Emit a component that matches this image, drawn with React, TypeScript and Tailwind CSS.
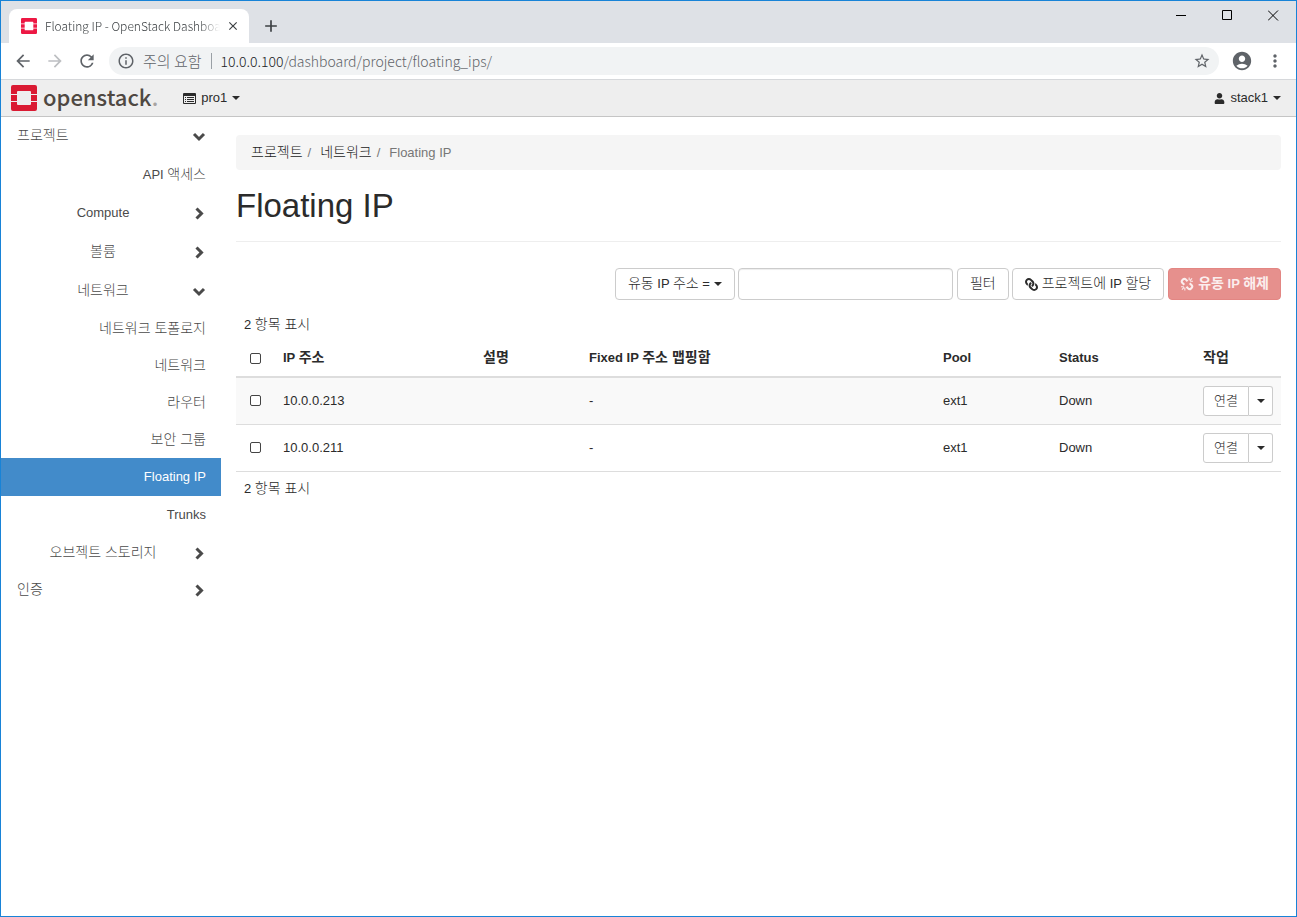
import type { ReactNode } from "react";
import {
  MdAccountCircle,
  MdAdd,
  MdArrowBack,
  MdArrowForward,
  MdClose,
  MdInfoOutline,
  MdMoreVert,
  MdRefresh,
  MdStarBorder,
} from "react-icons/md";
import { FaLink, FaUser } from "react-icons/fa";

/* Sets Hangul one pixel larger than the Latin text around it. */
function Label({ text }: { text: string }) {
  return (
    <span>
      {text.split(/([가-힣]+(?: [가-힣]+)*)/).map((part, i) =>
        i % 2 === 1 ? (
          <span key={i} className="text-[14px] leading-none">
            {part}
          </span>
        ) : (
          part
        ),
      )}
    </span>
  );
}

function OpenStackMark({ className }: { className: string }) {
  return (
    <svg viewBox="0 0 26 26" className={className} aria-hidden="true">
      <path
        fill="currentColor"
        d="M2 0h22a2 2 0 0 1 2 2v7h-6V7a1 1 0 0 0-1-1H7a1 1 0 0 0-1 1v2H0V2a2 2 0 0 1 2-2zM0 10h6v6H0zM20 10h6v6h-6zM0 17h6v2a1 1 0 0 0 1 1h12a1 1 0 0 0 1-1v-2h6v7a2 2 0 0 1-2 2H2a2 2 0 0 1-2-2z"
      />
    </svg>
  );
}

function Caret() {
  return (
    <svg viewBox="0 0 8 4" className="h-1 w-2 shrink-0" aria-hidden="true">
      <path d="M0 0h8L4 4z" fill="currentColor" />
    </svg>
  );
}

function Chevron({ open }: { open?: boolean }) {
  return (
    <svg viewBox="0 0 14 14" className="size-3.5 shrink-0" fill="none" stroke="currentColor" strokeWidth="3" aria-hidden="true">
      <path d={open ? "M2 5l5 5 5-5" : "M4.500 2.500l5 5-5 5"} />
    </svg>
  );
}

function ListIcon() {
  return (
    <svg viewBox="0 0 13 11" className="h-[11px] w-[13px]" aria-hidden="true">
      <path
        fill="currentColor"
        fillRule="evenodd"
        d="M1 0h11a1 1 0 0 1 1 1v9a1 1 0 0 1-1 1H1a1 1 0 0 1-1-1V1a1 1 0 0 1 1-1zM1 3v7h11V3zM2 4h1v1H2zM4 4h7v1H4zM2 6h1v1H2zM4 6h7v1H4zM2 8h1v1H2zM4 8h7v1H4z"
      />
    </svg>
  );
}

function BrokenLinkIcon() {
  return (
    <svg viewBox="0 0 13 13" className="size-3.5 shrink-0" fill="none" stroke="currentColor" aria-hidden="true">
      <path
        strokeWidth="2"
        d="M7 4L5.300 2.200a1.600 1.600 0 0 0-2.300 0l-.9.9a1.600 1.600 0 0 0 0 2.300L4 7.200M6 9l1.700 1.800a1.600 1.600 0 0 0 2.300 0l.9-.9a1.600 1.600 0 0 0 0-2.300L9 5.800"
      />
      <path strokeWidth="1" d="M8.500 3V.5M9.500 4H12M9.200 3.300l2-2M4.500 10v2.500M3.500 9H1M3.800 9.700l-2 2" />
    </svg>
  );
}

function BrowserChrome() {
  return (
    <header className="font-['Noto_Sans_CJK_KR','Open_Sans',sans-serif] font-light">
      <div className="flex h-[42px] items-stretch justify-between bg-[#dee1e6]">
        <div className="flex items-end pl-2">
          <div className="flex h-[34px] w-60 items-center rounded-t-lg bg-white pr-[9px] pl-3 text-xs text-[#3c4043]">
            <OpenStackMark className="size-4 shrink-0 text-[#ed1844]" />
            <span className="ml-2 min-w-0 flex-1 overflow-hidden whitespace-nowrap [mask-image:linear-gradient(to_right,black_88%,transparent)]">
              Floating IP - OpenStack Dashboard
            </span>
            <button type="button" aria-label="탭 닫기" className="ml-1.5 text-[#3c4043]">
              <MdClose className="size-3.5" />
            </button>
          </div>
          <button type="button" aria-label="새 탭" className="ml-3 flex h-[34px] items-center text-[#3c4043]">
            <MdAdd className="size-5" />
          </button>
        </div>
        <div className="flex h-7 items-center text-black">
          <button type="button" aria-label="최소화" className="flex w-[46px] justify-center">
            <svg viewBox="0 0 11 11" className="size-[11px]" aria-hidden="true">
              <path d="M0 5h10v1H0z" fill="currentColor" />
            </svg>
          </button>
          <button type="button" aria-label="최대화" className="flex w-[46px] justify-center">
            <svg viewBox="0 0 11 11" className="size-[11px]" aria-hidden="true">
              <path d="M.5.5h9v9h-9z" fill="none" stroke="currentColor" />
            </svg>
          </button>
          <button type="button" aria-label="닫기" className="flex w-[46px] justify-center">
            <svg viewBox="0 0 11 11" className="size-[11px]" aria-hidden="true">
              <path d="M0 .5l10 10M10 .5l-10 10" fill="none" stroke="currentColor" />
            </svg>
          </button>
        </div>
      </div>
      <div className="flex h-[37px] items-center border-b border-[#d6d8db] bg-white pr-[11px] pl-3 text-[#5f6368]">
        <button type="button" aria-label="뒤로">
          <MdArrowBack className="size-5" />
        </button>
        <button type="button" aria-label="앞으로" className="ml-3 text-[#bdbfc2]">
          <MdArrowForward className="size-5" />
        </button>
        <button type="button" aria-label="새로고침" className="ml-3">
          <MdRefresh className="size-5" />
        </button>
        <div className="ml-3 flex h-7 flex-1 items-center rounded-full bg-[#f1f3f4] px-2 text-[15px]">
          <MdInfoOutline className="size-[18px]" />
          <span className="ml-2">주의 요함</span>
          <span className="mx-[9px] h-4 w-px bg-[#9aa0a6]" />
          <span className="flex-1 text-sm">
            <span className="text-[#202124]">10.0.0.100</span>/dashboard/project/floating_ips/
          </span>
          <button type="button" aria-label="북마크">
            <MdStarBorder className="size-[18px]" />
          </button>
        </div>
        <button type="button" aria-label="사용자" className="ml-3">
          <MdAccountCircle className="size-[22px]" />
        </button>
        <button type="button" aria-label="메뉴" className="ml-3">
          <MdMoreVert className="size-5" />
        </button>
      </div>
    </header>
  );
}

function TopBar() {
  return (
    <nav className="flex h-[37px] items-center border-b border-[#c5c5c5] bg-[#eee] pr-[15px] pl-2.5">
      <a href="#home" aria-label="openstack" className="flex items-center">
        <OpenStackMark className="size-[26px] text-[#da1a32]" />
        <span className="ml-1.5 pb-1 font-['Noto_Sans_CJK_KR',sans-serif] text-[22px] leading-7 font-medium text-[#4f4842]">
          openstack<span className="text-[#a8a4a1]">.</span>
        </span>
      </a>
      <button type="button" className="ml-[25px] flex items-center gap-[5px]">
        <ListIcon />
        <span>pro1</span>
        <Caret />
      </button>
      <button type="button" className="ml-auto flex items-center gap-[5px]">
        <FaUser className="size-[11px]" />
        <span>stack1</span>
        <Caret />
      </button>
    </nav>
  );
}

function RootItem({ label, open }: { label: string; open?: boolean }) {
  return (
    <button type="button" className="flex h-[38px] w-full items-center justify-between pr-[15px] pb-0.5 pl-4">
      <Label text={label} />
      <Chevron open={open} />
    </button>
  );
}

function GroupItem({ label, open }: { label: string; open?: boolean }) {
  return (
    <button type="button" className="flex h-[39px] w-full items-center pr-[15px] pl-4">
      <span className="flex-1 pr-[3px] text-center">
        <Label text={label} />
      </span>
      <Chevron open={open} />
    </button>
  );
}

function LeafItem({ label, active }: { label: string; active?: boolean }) {
  return (
    <a
      href="#panel"
      className={
        active
          ? "flex h-[38px] items-center justify-end bg-[#428bca] pr-[15px] text-white"
          : "flex h-[37px] items-center justify-end pr-[15px]"
      }
    >
      <Label text={label} />
    </a>
  );
}

function Sidebar() {
  return (
    <aside className="w-[220px] shrink-0 pt-px text-[#4a4a4a]">
      <RootItem label="프로젝트" open />
      <LeafItem label="API 액세스" />
      <GroupItem label="Compute" />
      <GroupItem label="볼륨" />
      <GroupItem label="네트워크" open />
      <LeafItem label="네트워크 토폴로지" />
      <LeafItem label="네트워크" />
      <LeafItem label="라우터" />
      <LeafItem label="보안 그룹" />
      <LeafItem label="Floating IP" active />
      <LeafItem label="Trunks" />
      <GroupItem label="오브젝트 스토리지" />
      <RootItem label="인증" />
    </aside>
  );
}

function ToolButton({ children }: { children: ReactNode }) {
  return (
    <button type="button" className="flex h-8 items-center gap-1 rounded border border-[#ccc] bg-white px-3">
      {children}
    </button>
  );
}

function Toolbar() {
  return (
    <div className="mt-[26px] flex justify-end gap-1">
      <div className="flex gap-[3px]">
        <ToolButton>
          <Label text="유동 IP 주소 =" />
          <Caret />
        </ToolButton>
        <input
          type="text"
          aria-label="필터 값"
          className="h-8 w-[215px] rounded border border-[#ccc] bg-white px-3 shadow-[inset_0_1px_1px_rgba(0,0,0,0.075)]"
        />
      </div>
      <div className="flex gap-[3px]">
        <ToolButton>
          <Label text="필터" />
        </ToolButton>
        <ToolButton>
          <FaLink className="size-[13px] -scale-x-100" />
          <Label text="프로젝트에 IP 할당" />
        </ToolButton>
      </div>
      <button
        type="button"
        disabled
        className="flex h-8 items-center gap-1 rounded border border-[#e38683] bg-[#e6908d] px-[11px] font-bold text-[#fbeeee]"
      >
        <BrokenLinkIcon />
        <Label text="유동 IP 해제" />
      </button>
    </div>
  );
}

function CheckBox({ label }: { label: string }) {
  return (
    <input
      type="checkbox"
      aria-label={label}
      className="mx-auto block size-[11px] appearance-none rounded-xs border border-[#444] bg-white checked:bg-[#428bca]"
    />
  );
}

const headings = ["IP 주소", "설명", "Fixed IP 주소 맵핑함", "Pool", "Status", "작업"];

function FloatingIpTable() {
  return (
    <table className="w-full table-fixed border-collapse text-left">
      <colgroup>
        <col className="w-[39px]" />
        <col className="w-[200px]" />
        <col className="w-[106px]" />
        <col />
        <col className="w-[116px]" />
        <col className="w-[144px]" />
        <col className="w-[86px]" />
      </colgroup>
      <thead>
        <tr className="h-[39px] border-b-2 border-[#ddd]">
          <th className="px-0 pt-0.5 pb-0">
            <CheckBox label="모두 선택" />
          </th>
          {headings.map((heading) => (
            <th key={heading} className="px-2 pt-0.5 pb-0">
              <Label text={heading} />
            </th>
          ))}
        </tr>
      </thead>
      <tbody>
        {["10.0.0.213", "10.0.0.211"].map((ip) => (
          <tr key={ip} className="h-[47px] border-b border-[#ddd] odd:bg-[#f9f9f9]">
            <td className="p-0">
              <CheckBox label={ip} />
            </td>
            <td className="px-2 py-0">{ip}</td>
            <td className="px-2 py-0" />
            <td className="px-2 py-0">-</td>
            <td className="px-2 py-0">ext1</td>
            <td className="px-2 py-0">Down</td>
            <td className="px-2 py-0">
              <div className="flex">
                <button type="button" className="h-[30px] flex-1 rounded-l-[3px] border border-[#ccc] bg-white">
                  연결
                </button>
                <button
                  type="button"
                  aria-label="추가 작업"
                  className="flex h-[30px] w-6 items-center justify-center rounded-r-[3px] border border-l-0 border-[#ccc] bg-white"
                >
                  <Caret />
                </button>
              </div>
            </td>
          </tr>
        ))}
      </tbody>
    </table>
  );
}

export default function App() {
  return (
    <div className="flex min-h-screen flex-col border border-[#1883d7] bg-white font-['Liberation_Sans','Noto_Sans_CJK_KR',sans-serif] text-[13px] leading-[18px] font-light text-[#2b2b2b]">
      <BrowserChrome />
      <TopBar />
      <div className="flex flex-1">
        <Sidebar />
        <main className="min-w-0 flex-1 px-[15px] pt-[18px]">
          <nav aria-label="위치">
            <ol className="flex h-[35px] items-center rounded bg-[#f5f5f5] px-[15px] text-[#777]">
              <li>
                <a href="#project" className="text-[#222]">
                  <Label text="프로젝트" />
                </a>
                <span className="px-[5px]">/</span>
              </li>
              <li className="ml-1">
                <a href="#network" className="text-[#222]">
                  <Label text="네트워크" />
                </a>
                <span className="px-[5px]">/</span>
              </li>
              <li className="ml-1">Floating IP</li>
            </ol>
          </nav>
          <h1 className="border-b border-[#eee] py-[17px] text-[33px] leading-[37px]">Floating IP</h1>
          <Toolbar />
          <p className="mt-4 pl-2">
            <Label text="2 항목 표시" />
          </p>
          <div className="mt-1">
            <FloatingIpTable />
          </div>
          <p className="mt-2 pl-2">
            <Label text="2 항목 표시" />
          </p>
        </main>
      </div>
    </div>
  );
}
